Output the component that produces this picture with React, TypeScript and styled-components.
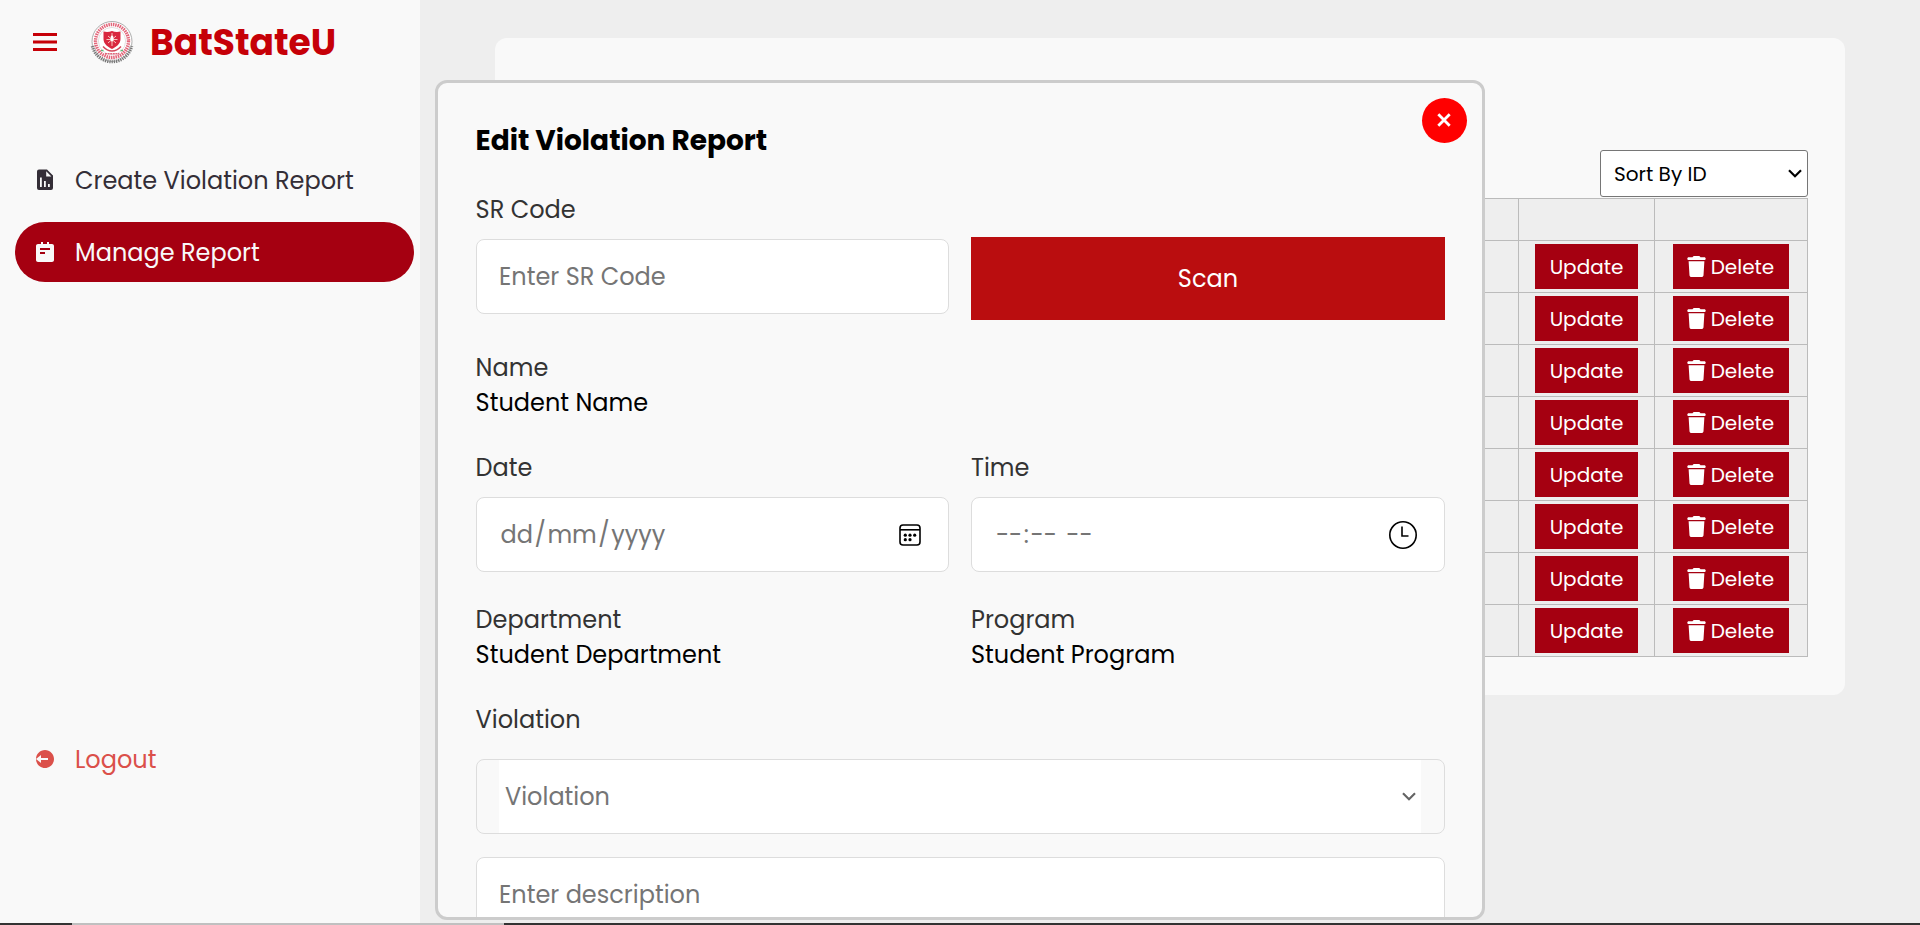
import React from "react";
import styled, { createGlobalStyle } from "styled-components";
import { BiMenu, BiSolidNotepad, BiSolidLogOutCircle } from "react-icons/bi";
import { FaTrash } from "react-icons/fa6";

const GlobalStyle = createGlobalStyle`
  * { box-sizing: border-box; }
  html, body { margin: 0; height: 100%; overflow: hidden; }
  body {
    background: #eee;
    font-family: Poppins, Inter, "Open Sans", sans-serif;
    color: #000;
  }
`;

const Page = styled.div`
  display: flex;
  height: 925px;
  width: 1920px;
  overflow: hidden;
  position: relative;
`;

const Sidebar = styled.aside`
  width: 420px;
  flex: none;
  background: #f9f9f9;
  display: flex;
  flex-direction: column;
`;

const Brand = styled.header`
  display: flex;
  align-items: center;
  height: 84px;
  padding-left: 27px;
  color: #c60008;
  svg { flex: none; }
`;

const BrandName = styled.span`
  margin-left: 16px;
  padding-top: 2px;
  font-size: 36px;
  font-weight: 700;
  line-height: 82px;
`;

const Seal = styled.svg`
  margin-left: 27px;
`;

const Menu = styled.nav<{ $top: number }>`
  display: flex;
  flex-direction: column;
  gap: 12px;
  margin-top: ${(p) => p.$top}px;
  padding: 0 6px 0 15px;
`;

const MenuItem = styled.a<{ $tone: string; $active?: boolean }>`
  display: flex;
  align-items: center;
  height: 60px;
  border-radius: 30px;
  padding-left: 18px;
  gap: 18px;
  font-size: 24px;
  color: ${(p) => p.$tone};
  background: ${(p) => (p.$active ? "#a50011" : "transparent")};
  svg { flex: none; width: 24px; height: 24px; margin-bottom: 1px; }
`;

const Main = styled.main`
  flex: 1;
  padding: 38px 75px 0;
`;

const Card = styled.section`
  height: 657px;
  border-radius: 12px;
  background: #f9f9f9;
  padding: 112px 37px 0 37px;
  display: flex;
  flex-direction: column;
`;

const SortSelect = styled.div`
  align-self: flex-end;
  width: 208px;
  height: 47px;
  border: 1px solid #767676;
  border-radius: 3px;
  background: #fff;
  display: flex;
  align-items: center;
  justify-content: space-between;
  padding: 0 5px 0 13px;
  font-size: 20px;
`;

const Table = styled.table`
  margin-top: 1px;
  width: 100%;
  border-collapse: collapse;
  table-layout: fixed;
  background: #eee;
  th, td { border: 1px solid #bbb; padding: 0; }
  th { height: 42px; }
  td { height: 52px; text-align: center; vertical-align: middle; }
`;

const Column = styled.col<{ $width?: number }>`
  width: ${(p) => (p.$width ? `${p.$width}px` : "auto")};
`;

const RowButton = styled.button<{ $width: number }>`
  width: ${(p) => p.$width}px;
  height: 45px;
  border: 0;
  padding: 0;
  display: inline-flex;
  align-items: center;
  justify-content: center;
  vertical-align: middle;
  background: #a50011;
  color: #fff;
  font: inherit;
  font-size: 20px;
  svg { margin: 0 4px 0 -2px; }
`;

const Modal = styled.div`
  position: absolute;
  left: 435px;
  top: 80px;
  width: 1050px;
  height: 840px;
  border: 3px solid #ccc;
  border-radius: 12px;
  background: #f9f9f9;
  padding: 37px 37px 0 37.6px;
  overflow: hidden;
`;

const CloseButton = styled.button`
  position: absolute;
  top: 15px;
  right: 15px;
  width: 45px;
  height: 45px;
  border: 0;
  border-radius: 50%;
  background: #f00;
  padding: 0 1px 1px 0;
  display: flex;
  align-items: center;
  justify-content: center;
`;

const Title = styled.h2`
  margin: 0;
  font-size: 28px;
  line-height: 42px;
  font-weight: 700;
`;

const FormRow = styled.div<{ $top: number }>`
  display: grid;
  grid-template-columns: 473.4px 474px;
  column-gap: 22px;
  margin-top: ${(p) => p.$top}px;
`;

const Field = styled.div<{ $top?: number }>`
  display: flex;
  flex-direction: column;
  margin-top: ${(p) => p.$top ?? 0}px;
`;

const Label = styled.label`
  font-size: 24px;
  line-height: 35px;
  color: #333;
`;

const Value = styled.span`
  font-size: 24px;
  line-height: 35px;
`;

const InputBox = styled.div<{ $top?: number }>`
  height: 75px;
  flex: none;
  margin-top: ${(p) => p.$top ?? 12}px;
  border: 1px solid #ddd;
  border-radius: 8px;
  background: #fff;
  padding: 0 27px 0 22.4px;
  display: flex;
  align-items: center;
  justify-content: space-between;
  font-size: 24px;
  color: #757575;
`;

const ViolationBox = styled(InputBox)`
  background: #f9f9f9;
  padding: 0 23px 0 22.4px;
`;

const ViolationSelect = styled.div`
  flex: 1;
  height: 100%;
  background: #fff;
  display: flex;
  align-items: center;
  justify-content: space-between;
  padding: 0 5px 0 6px;
`;

const ScanButton = styled.button`
  height: 83px;
  margin-top: 45px;
  border: 0;
  background: #ba0d0f;
  color: #fff;
  font: inherit;
  font-size: 24px;
`;

const Segments = styled.span`
  white-space: pre;
`;

const Segment = styled.span<{ $pad: number }>`
  padding: 0 ${(p) => p.$pad}px;
`;

const Scrollbar = styled.div`
  position: absolute;
  left: 0;
  right: 0;
  bottom: 0;
  height: 2px;
  background: linear-gradient(to right, #333 72px, #c0c0c0 72px, #c0c0c0 504px, #333 504px);
`;

const Chevron = ({ color, width }: { color: string; width: number }) => (
  <svg width={width} height={(width * 9) / 14} viewBox="0 0 14 9" fill="none">
    <path d="M1 1.2 7 7.2 13 1.2" stroke={color} strokeWidth="2.2" />
  </svg>
);

const ReportIcon = () => (
  <svg viewBox="0 0 24 24" fill="currentColor">
    <path
      fillRule="evenodd"
      d="M6 1.5H14L20 7.5V20A2 2 0 0 1 18 22H6A2 2 0 0 1 4 20V3.5A2 2 0 0 1 6 1.5ZM13.2 3.2V8.4H18.4ZM7 9.5V19H8.8V9.5ZM11 13V19H12.8V13ZM15 16V19H16.8V16Z"
    />
  </svg>
);

const CalendarIcon = () => (
  <svg width="22" height="22" viewBox="0 0 22 22" fill="none">
    <rect x="1" y="1" width="20" height="20" rx="3" stroke="#000" strokeWidth="1.6" />
    <path d="M1 5.8H21" stroke="#000" strokeWidth="1.6" />
    <g fill="#000">
      <circle cx="6.3" cy="11.2" r="1.6" />
      <circle cx="11" cy="11.2" r="1.6" />
      <circle cx="15.7" cy="11.2" r="1.6" />
      <circle cx="6.3" cy="15.7" r="1.6" />
      <circle cx="11" cy="15.7" r="1.6" />
    </g>
  </svg>
);

const ClockIcon = () => (
  <svg width="28" height="28" viewBox="0 0 28 28" fill="none" stroke="#000" strokeWidth="1.6">
    <circle cx="14" cy="14" r="13.2" />
    <path d="M13 5.5V15H19.5" />
  </svg>
);

const UniversitySeal = () => (
  <Seal width="44" height="44" viewBox="0 0 44 44">
    <circle cx="22" cy="21.5" r="20" fill="#fff" stroke="#999" strokeWidth=".8" />
    <circle cx="22" cy="21" r="16.5" fill="none" stroke="#e2667a" strokeWidth="3.4" strokeDasharray="1.5 .8" />
    <path d="M2.5 26A20 20 0 0 0 41.5 26" fill="none" stroke="#777" strokeWidth="3.6" strokeDasharray="1.2 1" />
    <circle cx="22" cy="21" r="13.6" fill="#fff" stroke="#ccc" strokeWidth=".6" />
    <path d="M13.5 11.5Q18 12.5 22 11Q26 12.5 30.5 11.5V19C30.5 24 26 27 22 29C18 27 13.5 24 13.5 19Z" fill="#d9283f" />
    <path d="M22 13V26M18 16L26 23M26 16L18 23M16.5 19.5H27.5" stroke="#f7c3bd" strokeWidth="1" />
    <ellipse cx="22" cy="18.5" rx="1.5" ry="3" fill="#fff" />
    <path d="M13 26.5Q17 31 22 31Q27 31 31 26.5" fill="none" stroke="#d4495b" strokeWidth="1.4" />
    <path d="M11 30.5h2.5M30.5 30.5H33" stroke="#5fb878" strokeWidth="1.6" />
    <path d="M15 33.8h14" stroke="#e2667a" strokeWidth="1.6" strokeDasharray="2 .6" />
  </Seal>
);

const rows = Array.from({ length: 8 }, (_, i) => i + 1);

export default function App() {
  return (
    <Page>
      <GlobalStyle />
      <Sidebar>
        <Brand>
          <BiMenu size={36} />
          <UniversitySeal />
          <BrandName>BatStateU</BrandName>
        </Brand>
        <Menu $top={66}>
          <MenuItem $tone="#342e37"><ReportIcon />Create Violation Report</MenuItem>
          <MenuItem $tone="#f9f9f9" $active><BiSolidNotepad />Manage Report</MenuItem>
        </Menu>
        <Menu $top={447}>
          <MenuItem $tone="#db504a"><BiSolidLogOutCircle />Logout</MenuItem>
        </Menu>
      </Sidebar>
      <Main>
        <Card>
          <SortSelect>Sort By ID<Chevron color="#000" width={14} /></SortSelect>
          <Table>
            <colgroup>
              <Column />
              <Column $width={136} />
              <Column $width={153} />
            </colgroup>
            <thead><tr><th /><th /><th /></tr></thead>
            <tbody>
              {rows.map((id) => (
                <tr key={id}>
                  <td />
                  <td><RowButton $width={103}>Update</RowButton></td>
                  <td><RowButton $width={116}><FaTrash size={21} />Delete</RowButton></td>
                </tr>
              ))}
            </tbody>
          </Table>
        </Card>
      </Main>
      <Modal>
        <CloseButton aria-label="Close">
          <svg width="14" height="14" viewBox="0 0 14 14">
            <path d="M1.3 1.3 12.7 12.7M12.7 1.3 1.3 12.7" stroke="#fff" strokeWidth="2.8" />
          </svg>
        </CloseButton>
        <Title>Edit Violation Report</Title>
        <FormRow $top={30}>
          <Field>
            <Label>SR Code</Label>
            <InputBox>Enter SR Code</InputBox>
          </Field>
          <ScanButton>Scan</ScanButton>
        </FormRow>
        <FormRow $top={30}>
          <Field>
            <Label>Name</Label>
            <Value>Student Name</Value>
          </Field>
        </FormRow>
        <FormRow $top={30}>
          <Field>
            <Label>Date</Label>
            <InputBox>
              <Segments>
                <Segment $pad={1.5}>dd</Segment>/<Segment $pad={1.5}>mm</Segment>/<Segment $pad={1.5}>yyyy</Segment>
              </Segments>
              <CalendarIcon />
            </InputBox>
          </Field>
          <Field>
            <Label>Time</Label>
            <InputBox>
              <Segments>
                <Segment $pad={1.5}>--</Segment>:<Segment $pad={1.5}>--</Segment>{" "}<Segment $pad={1.5}>--</Segment>
              </Segments>
              <ClockIcon />
            </InputBox>
          </Field>
        </FormRow>
        <FormRow $top={30}>
          <Field>
            <Label>Department</Label>
            <Value>Student Department</Value>
          </Field>
          <Field>
            <Label>Program</Label>
            <Value>Student Program</Value>
          </Field>
        </FormRow>
        <Field $top={30}>
          <Label>Violation</Label>
          <ViolationBox $top={22}>
            <ViolationSelect>Violation<Chevron color="#666" width={14} /></ViolationSelect>
          </ViolationBox>
          <InputBox $top={23}>Enter description</InputBox>
        </Field>
      </Modal>
      <Scrollbar />
    </Page>
  );
}
